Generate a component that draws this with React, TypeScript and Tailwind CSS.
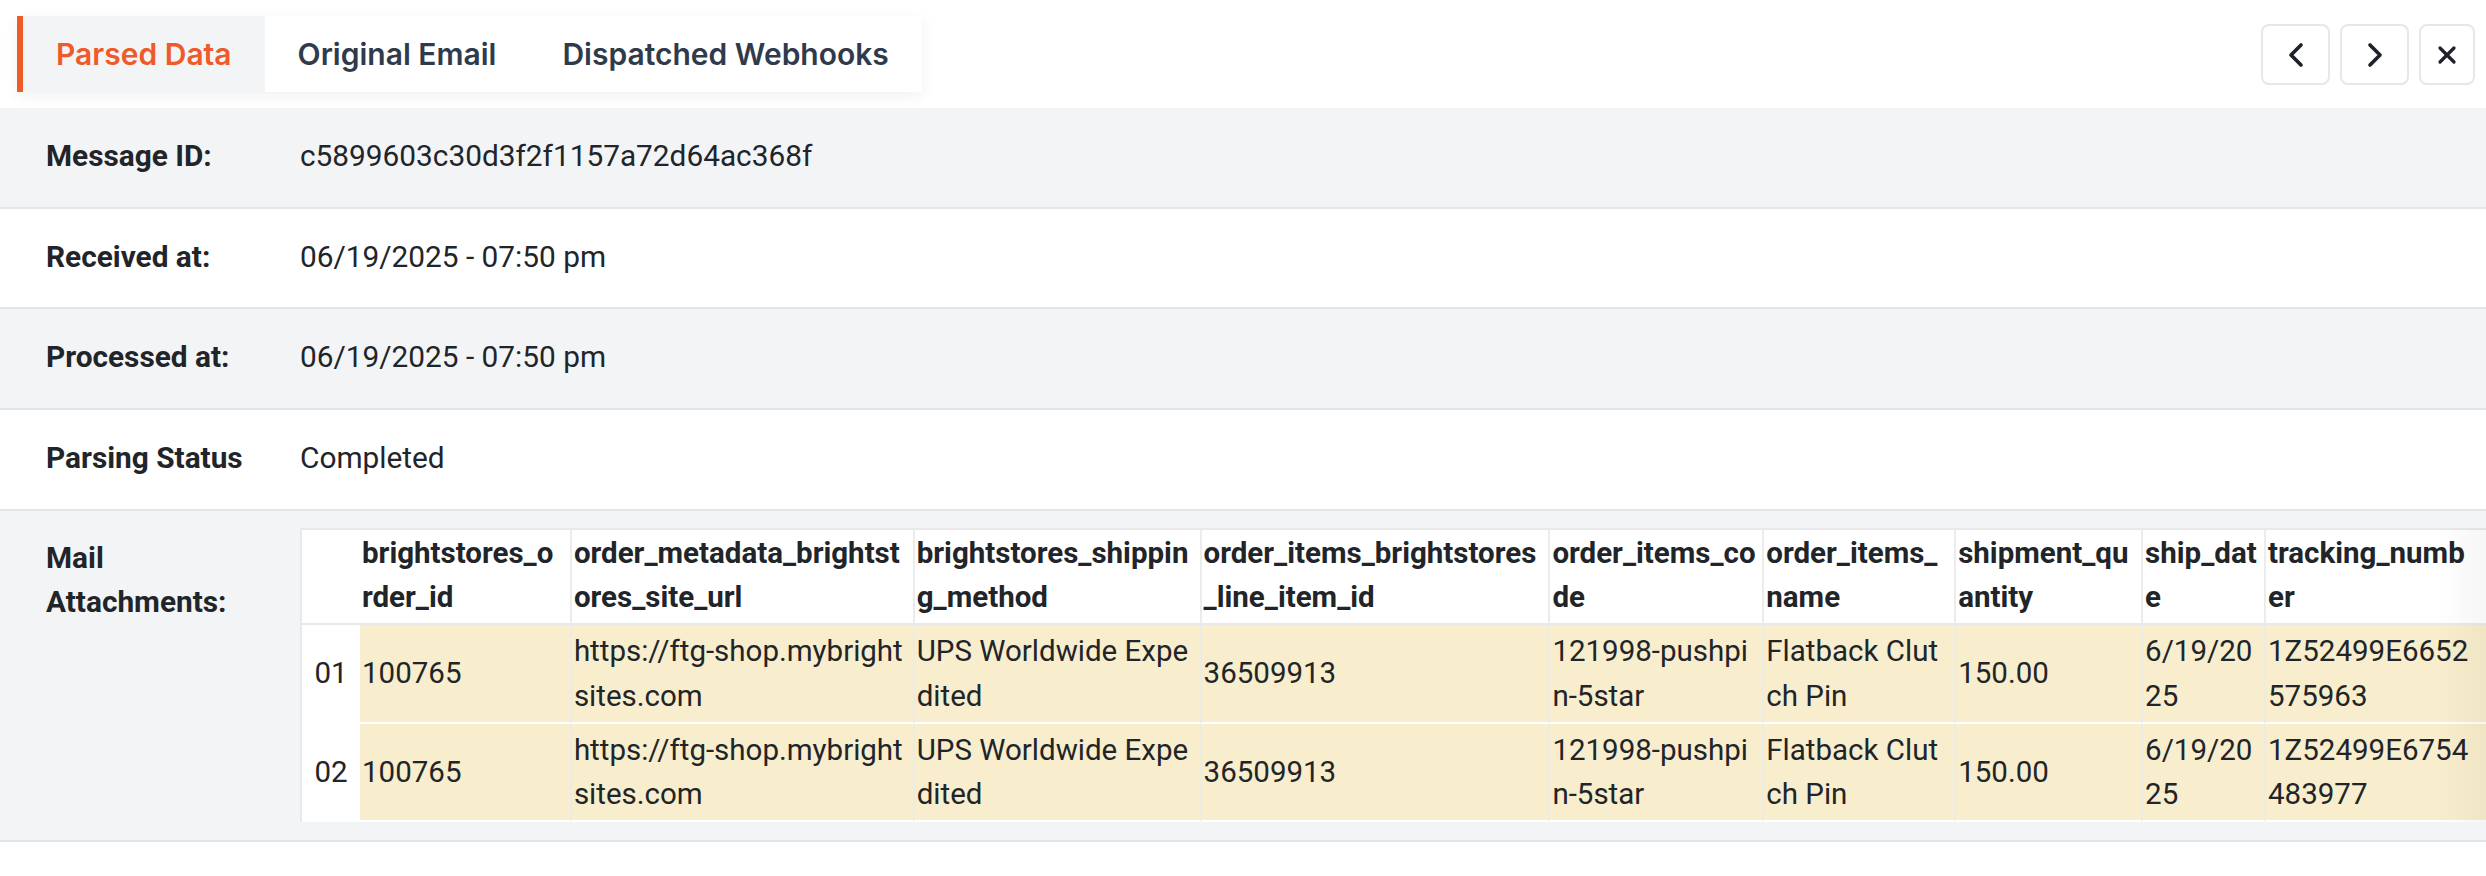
import { ChevronLeft, ChevronRight, X } from "lucide-react";

const fields = [
  { label: "Message ID:", value: "c5899603c30d3f2f1157a72d64ac368f" },
  { label: "Received at:", value: "06/19/2025 - 07:50 pm" },
  { label: "Processed at:", value: "06/19/2025 - 07:50 pm" },
  { label: "Parsing Status", value: "Completed" },
];

// widths are the border-to-border sizes of each column; pad tweaks where the text wraps
const columns = [
  { key: "brightstores_order_id", width: 210, pad: "pl-[2px] pr-[10px]" },
  { key: "order_metadata_brightstores_site_url", width: 343, pad: "px-[2px]" },
  { key: "brightstores_shipping_method", width: 287, pad: "px-[2px]" },
  { key: "order_items_brightstores_line_item_id", width: 349, pad: "px-[2px]" },
  { key: "order_items_code", width: 214, pad: "px-[2px]" },
  { key: "order_items_name", width: 192, pad: "px-[2px]" },
  { key: "shipment_quantity", width: 187, pad: "px-[2px]" },
  { key: "ship_date", width: 123, pad: "px-[2px]" },
  { key: "tracking_number", width: 222, pad: "pl-[2px] pr-[14px]" },
];

const rows: Record<string, string>[] = [
  {
    brightstores_order_id: "100765",
    order_metadata_brightstores_site_url: "https://ftg-shop.mybrightsites.com",
    brightstores_shipping_method: "UPS Worldwide Expedited",
    order_items_brightstores_line_item_id: "36509913",
    order_items_code: "121998-pushpin-5star",
    order_items_name: "Flatback Clutch Pin",
    shipment_quantity: "150.00",
    ship_date: "6/19/2025",
    tracking_number: "1Z52499E6652575963",
  },
  {
    brightstores_order_id: "100765",
    order_metadata_brightstores_site_url: "https://ftg-shop.mybrightsites.com",
    brightstores_shipping_method: "UPS Worldwide Expedited",
    order_items_brightstores_line_item_id: "36509913",
    order_items_code: "121998-pushpin-5star",
    order_items_name: "Flatback Clutch Pin",
    shipment_quantity: "150.00",
    ship_date: "6/19/2025",
    tracking_number: "1Z52499E6754483977",
  },
];

function Tabs() {
  return (
    <div className="flex h-[76px] shadow-[0_4px_14px_rgba(0,0,0,0.06)] font-['Inter',sans-serif] text-[30px] font-semibold">
      <div className="flex items-center border-l-[6px] border-[#ef5a29] bg-[#f3f4f6] px-[33px] text-[#ef5a29]">
        Parsed Data
      </div>
      <div className="flex items-center bg-white px-[33px] text-[#2f3b4d]">Original Email</div>
      <div className="flex items-center bg-white px-[33px] text-[#2f3b4d]">Dispatched Webhooks</div>
    </div>
  );
}

function NavButtons() {
  return (
    <div className="flex gap-[10px] pt-[8px] text-[#1f2329]">
      <button className="flex h-[61px] w-[69px] items-center justify-center rounded-[8px] border-2 border-[#e7e7e7] bg-white">
        <ChevronLeft size={40} strokeWidth={2.2} />
      </button>
      <button className="flex h-[61px] w-[69px] items-center justify-center rounded-[8px] border-2 border-[#e7e7e7] bg-white">
        <ChevronRight size={40} strokeWidth={2.2} />
      </button>
      <button className="flex h-[61px] w-[56px] items-center justify-center rounded-[8px] border-2 border-[#e7e7e7] bg-white">
        <X size={28} strokeWidth={2.8} />
      </button>
    </div>
  );
}

function AttachmentTable() {
  return (
    <div className="relative overflow-hidden">
      <table className="table-fixed border-separate border-spacing-0 border-t-2 border-l-2 border-[#e9e9e9] bg-white text-left text-[29.5px]">
        <colgroup>
          <col style={{ width: 58 }} />
          {columns.map((c) => (
            <col key={c.key} style={{ width: c.width }} />
          ))}
        </colgroup>
        <thead>
          <tr>
            <th className="border-b-2 border-[#e9e9e9]" />
            {columns.map((c, i) => (
              <th
                key={c.key}
                className={`border-b-2 border-b-[#e9e9e9] pt-[1px] pb-[4px] align-top font-bold break-all ${c.pad} ${
                  i === 0 ? "" : "border-l-2 border-l-[#ececec]"
                }`}
              >
                {c.key}
              </th>
            ))}
          </tr>
        </thead>
        <tbody>
          {rows.map((row, r) => (
            <tr key={r}>
              <td className="border-b-2 border-white text-center align-middle">
                {String(r + 1).padStart(2, "0")}
              </td>
              {columns.map((c, i) => (
                <td
                  key={c.key}
                  className={`border-b-2 border-b-white bg-[#f8edcc] py-[4px] align-middle break-all ${c.pad} ${
                    i === 0 ? "" : "border-l-2 border-l-[#ecebe4]"
                  }`}
                >
                  {row[c.key]}
                </td>
              ))}
            </tr>
          ))}
        </tbody>
      </table>
      <div className="pointer-events-none absolute inset-y-0 right-0 w-[50px] bg-gradient-to-r from-transparent to-[rgba(0,0,0,0.035)]" />
    </div>
  );
}

export default function App() {
  return (
    <div className="min-h-screen bg-white font-['Roboto',sans-serif] text-[29.8px] leading-[1.5] text-[#212529]">
      {/* Header with tabs and navigation */}
      <div className="flex h-[108px] items-start justify-between pt-[16px] pl-[17px] pr-[11px]">
        <Tabs />
        <NavButtons />
      </div>

      {/* Detail rows */}
      <div>
        {fields.map((f, i) => (
          <div
            key={f.label}
            className={`flex border-b-2 border-[#e4e5e7] pt-[26px] pb-[28px] ${i % 2 === 0 ? "bg-[#f3f4f6]" : "bg-white"}`}
          >
            <div className="w-[300px] shrink-0 pl-[46px] pr-[24px] font-bold">{f.label}</div>
            <div className="min-w-0 flex-1">{f.value}</div>
          </div>
        ))}
        <div className="flex items-start border-b-2 border-[#e4e5e7] bg-[#f3f4f6] pt-[17px] pb-[18px]">
          <div className="mt-[8px] w-[300px] shrink-0 pl-[46px] pr-[24px] font-bold">Mail Attachments:</div>
          <div className="min-w-0 flex-1">
            <AttachmentTable />
          </div>
        </div>
      </div>
    </div>
  );
}
